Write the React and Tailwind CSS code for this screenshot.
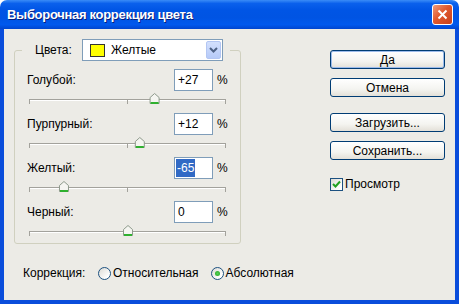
import React from "react";

// Ползунки диалога: значение от -100 до +100
const SLIDERS = [
  { label: "Голубой:", value: 27, text: "+27" },
  { label: "Пурпурный:", value: 12, text: "+12" },
  { label: "Желтый:", value: -65, text: "-65", selected: true },
  { label: "Черный:", value: 0, text: "0" },
];

const FONT = "font-['Liberation_Sans',Arial,sans-serif]";

function Slider({ value }) {
  const cx = ((value + 100) / 200) * 197 + 0.5;
  return (
    <svg width="198" height="14" className="block ml-[14px]">
      <line x1="0" y1="8.5" x2="197" y2="8.5" stroke="#A3A29C" />
      <line x1="1" y1="9.5" x2="197" y2="9.5" stroke="#FFFFFF" />
      <line x1="0.5" y1="9" x2="0.5" y2="13" stroke="#A3A29C" />
      <line x1="98.5" y1="9" x2="98.5" y2="13" stroke="#A3A29C" />
      <line x1="196.5" y1="9" x2="196.5" y2="13" stroke="#A3A29C" />
      <path
        d={`M${cx} 2.5 L${cx + 4.5} 6.5 V12.5 H${cx - 4.5} V6.5 Z`}
        fill="#F5F5F1"
        stroke="#8E9A8C"
      />
      <rect x={cx - 4} y="11" width="8" height="2" fill="#2FB02F" />
    </svg>
  );
}

function XpButton({ children, primary, className = "" }) {
  return (
    <div
      className={`h-[19px] rounded-[3px] border border-[#003C74] bg-[linear-gradient(to_bottom,#FFFFFF,#F4F4F0_60%,#E3E0D8)] flex items-center justify-center text-[12px] leading-none text-black ${
        primary ? "shadow-[inset_0_0_0_1px_#9DBCEB]" : ""
      } ${className}`}
    >
      {children}
    </div>
  );
}

function Radio({ checked }) {
  return (
    <span className="w-[13px] h-[13px] rounded-full border border-[#1C5180] bg-[linear-gradient(135deg,#DCDBD5,#FFFFFF_80%)] flex items-center justify-center">
      {checked && (
        <span className="w-[5px] h-[5px] rounded-full bg-[radial-gradient(circle,#55D255,#21A121)]" />
      )}
    </span>
  );
}

export default function App() {
  return (
    <div className={`w-[459px] h-[304px] flex flex-col bg-white text-black text-[12px] ${FONT}`}>
      {/* Title bar */}
      <div className="h-[29px] shrink-0 rounded-t-[7px] bg-[linear-gradient(to_bottom,#3A8CF7_0%,#0A60EC_12%,#0055E5_35%,#0054E3_60%,#0059EE_85%,#0045CF_100%)] flex items-center pl-[7px] pr-[6px]">
        <span className="text-white font-bold text-[13px] tracking-[-0.3px] [text-shadow:1px_1px_0_#0A1E7A]">
          Выборочная коррекция цвета
        </span>
        <div className="ml-auto w-[21px] h-[21px] rounded-[3px] border border-white bg-[linear-gradient(135deg,#EF9B7B,#E0582E_45%,#C7401C)] flex items-center justify-center">
          <svg width="11" height="11" viewBox="0 0 11 11">
            <path d="M1.5 1.5 L9.5 9.5 M9.5 1.5 L1.5 9.5" stroke="#FFFFFF" strokeWidth="2" />
          </svg>
        </div>
      </div>

      {/* Body */}
      <div className="flex-1 flex bg-[#ECEBE6] border-x-4 border-b-4 border-[#0A4DDB]">
        <div className="flex flex-col pl-[10px] pt-[10px]">
          <fieldset className="w-[227px] m-0 p-0 border border-[#D0D0BF] rounded-[3px] min-w-0">
            <legend className="ml-[7px] p-0">
              <div className="flex items-center h-[22px] pl-[13px] pr-[7px]">
                <span className="w-[47px]">Цвета:</span>
                <div className="w-[141px] h-[22px] border border-[#7F9DB9] bg-white flex items-center pl-[7px]">
                  <span className="w-[15px] h-[13px] bg-[#FFFF00] border border-[#333333]" />
                  <span className="ml-[6px]">Желтые</span>
                  <span className="ml-auto mr-[1px] w-[15px] h-[18px] rounded-[2px] border border-[#B3C6F3] bg-[linear-gradient(to_bottom,#D3E0FD,#B6CAF8)] flex items-center justify-center">
                    <svg width="9" height="6" viewBox="0 0 9 6">
                      <path d="M1 1 L4.5 4.5 L8 1" fill="none" stroke="#4D6185" strokeWidth="2" />
                    </svg>
                  </span>
                </div>
              </div>
            </legend>
            <div className="flex flex-col gap-[8px] pt-[8px] pb-[6px]">
              {SLIDERS.map((s) => (
                <div key={s.label} className="flex flex-col">
                  <div className="flex items-center h-[22px] pl-[12px]">
                    <span className="w-[147px]">{s.label}</span>
                    <div
                      className={`w-[39px] h-[22px] border border-[#7F9DB9] bg-white flex items-center ${
                        s.selected ? "pl-[1px]" : "pl-[3px]"
                      }`}
                    >
                      {s.selected ? (
                        <span className="bg-[#316AC5] text-white h-[18px] px-[1px] flex items-center">
                          {s.text}
                        </span>
                      ) : (
                        s.text
                      )}
                    </div>
                    <span className="ml-[4px]">%</span>
                  </div>
                  <Slider value={s.value} />
                </div>
              ))}
            </div>
          </fieldset>

          <div className="mt-[21px] ml-[9px] h-[16px] flex items-center">
            <span className="w-[75px]">Коррекция:</span>
            <Radio />
            <span className="ml-[2px]">Относительная</span>
            <span className="ml-[12px]">
              <Radio checked />
            </span>
            <span className="ml-[2px]">Абсолютная</span>
          </div>
        </div>

        {/* Buttons */}
        <div className="ml-auto mr-[10px] w-[115px] pt-[21px] flex flex-col">
          <XpButton primary>Да</XpButton>
          <XpButton className="mt-[9px]">Отмена</XpButton>
          <XpButton className="mt-[16px]">Загрузить...</XpButton>
          <XpButton className="mt-[9px]">Сохранить...</XpButton>
          <div className="mt-[15px] flex items-center">
            <span className="w-[13px] h-[13px] border border-[#1C5180] bg-[linear-gradient(135deg,#DCDBD5,#FFFFFF_80%)] flex items-center justify-center">
              <svg width="9" height="9" viewBox="0 0 9 9">
                <path d="M1 4 L3.5 6.5 L8 1.5" fill="none" stroke="#21A121" strokeWidth="2" />
              </svg>
            </span>
            <span className="ml-[2px]">Просмотр</span>
          </div>
        </div>
      </div>
    </div>
  );
}
